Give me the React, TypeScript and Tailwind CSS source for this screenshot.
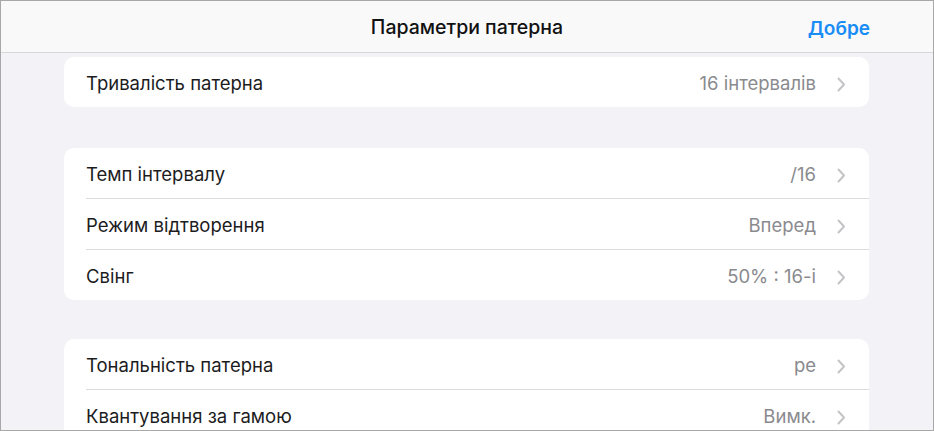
import React from 'react';

type Row = { label: string; value: string };

const groups: Row[][] = [
  [{ label: 'Тривалість патерна', value: '16 інтервалів' }],
  [
    { label: 'Темп інтервалу', value: '/16' },
    { label: 'Режим відтворення', value: 'Вперед' },
    { label: 'Свінг', value: '50% : 16-і' },
  ],
  [
    { label: 'Тональність патерна', value: 'ре' },
    { label: 'Квантування за гамою', value: 'Вимк.' },
  ],
];

function Chevron() {
  return (
    <svg width="9" height="15" viewBox="0 0 9 15" className="shrink-0">
      <path d="M1.5 1.5 L7 7.5 L1.5 13.5" fill="none" stroke="#c4c4c7" strokeWidth="2" strokeLinecap="round" strokeLinejoin="round" />
    </svg>
  );
}

function SettingsRow({ row, last }: { row: Row; last: boolean }) {
  return (
    <div className="pl-[22px]">
      <div className={`box-content flex items-center h-[46px] pt-[4px] pr-[23px] ${last ? '' : 'border-b border-[#dcdce0]'}`}>
        <span className="flex-1 text-[18.5px] text-[#1c1c1e]">{row.label}</span>
        <span className="text-[18.5px] text-[#8a8a8e] mr-[21px]">{row.value}</span>
        <Chevron />
      </div>
    </div>
  );
}

export default function App() {
  return (
    <div
      className="w-[934px] h-[431px] border border-[#a8a8a8] bg-[#f2f2f7] overflow-hidden flex flex-col"
      style={{ fontFamily: 'Inter, "Noto Sans", sans-serif' }}
    >
      <header className="h-[52px] shrink-0 bg-[#f9f9f9] border-b border-[#d8d8dc] flex items-center justify-center relative pt-[3px]">
        <h1 className="text-[19.5px] font-medium text-[#111111]">Параметри патерна</h1>
        <button className="absolute right-[63px] top-[14px] text-[19px] font-semibold text-[#1a8cf5]">Добре</button>
      </header>
      <div className="flex flex-col pl-[63px] pr-[64px] pt-[4px]">
        {groups.map((group, i) => (
          <div key={i} className={`bg-white rounded-[10px] overflow-hidden ${i === 1 ? 'mt-[41px]' : i === 2 ? 'mt-[39px]' : ''}`}>
            {group.map((row, j) => (
              <SettingsRow key={row.label} row={row} last={j === group.length - 1} />
            ))}
          </div>
        ))}
      </div>
    </div>
  );
}
